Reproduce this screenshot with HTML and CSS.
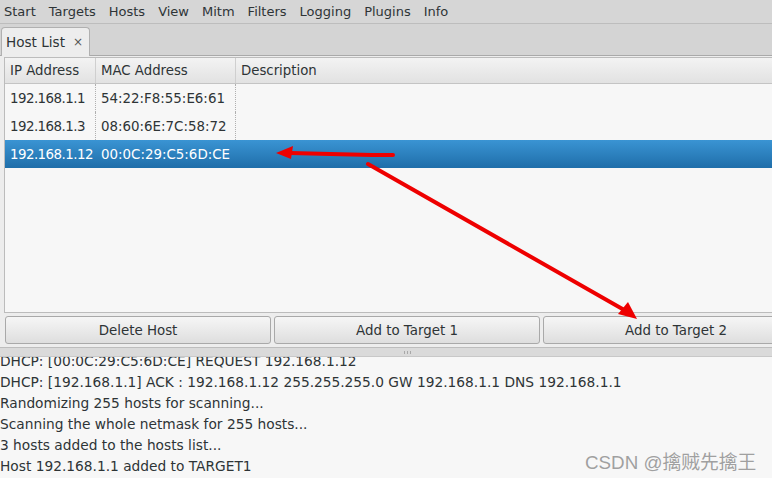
FILE: index.html
```html
<!DOCTYPE html>
<html>
<head>
<meta charset="utf-8">
<link rel="stylesheet" href="styles.css">
</head>
<body>
<div class="app">
  <div class="menubar">
    <span class="menu">Start</span>
    <span class="menu">Targets</span>
    <span class="menu">Hosts</span>
    <span class="menu">View</span>
    <span class="menu">Mitm</span>
    <span class="menu">Filters</span>
    <span class="menu">Logging</span>
    <span class="menu">Plugins</span>
    <span class="menu">Info</span>
  </div>
  <div class="tabbar">
    <div class="tab"><span class="tab-label">Host List</span><span class="tab-close">×</span></div>
  </div>
  <div class="page">
    <div class="tree">
      <div class="thead">
        <div class="col c1">IP Address</div>
        <div class="col c2">MAC Address</div>
        <div class="col c3">Description</div>
      </div>
      <div class="row">
        <div class="cell c1 ip">192.168.1.1</div>
        <div class="cell c2">54:22:F8:55:E6:61</div>
        <div class="cell c3"></div>
      </div>
      <div class="row">
        <div class="cell c1 ip">192.168.1.3</div>
        <div class="cell c2">08:60:6E:7C:58:72</div>
        <div class="cell c3"></div>
      </div>
      <div class="row selected">
        <div class="cell c1 ip">192.168.1.12</div>
        <div class="cell c2">00:0C:29:C5:6D:CE</div>
        <div class="cell c3"></div>
      </div>
    </div>
    <div class="buttons">
      <div class="btn">Delete Host</div>
      <div class="btn">Add to Target 1</div>
      <div class="btn">Add to Target 2</div>
    </div>
  </div>
  <div class="pane-sep"><span class="grip"></span></div>
  <div class="log">
    <div class="log-inner">
      <div class="line">DHCP: [00:0C:29:C5:6D:CE] REQUEST 192.168.1.12</div>
      <div class="line">DHCP: [192.168.1.1] ACK : 192.168.1.12 255.255.255.0 GW 192.168.1.1 DNS 192.168.1.1</div>
      <div class="line">Randomizing 255 hosts for scanning...</div>
      <div class="line">Scanning the whole netmask for 255 hosts...</div>
      <div class="line">3 hosts added to the hosts list...</div>
      <div class="line">Host 192.168.1.1 added to TARGET1</div>
    </div>
  </div>
  <div class="watermark">CSDN @擒贼先擒王</div>
  <svg class="arrows" width="772" height="478" viewBox="0 0 772 478">
    <path d="M393 155 L372 155 L330 154 L290 153" stroke="#ee0000" stroke-width="4" fill="none" stroke-linecap="round"/>
    <polygon points="276,153 293,146 291,159" fill="#ee0000"/>
    <path d="M368 164 L626 311" stroke="#ee0000" stroke-width="4" fill="none" stroke-linecap="round"/>
    <polygon points="637,319 618,314 628,302" fill="#ee0000"/>
  </svg>
</div>
</body>
</html>
```
FILE: styles.css
```css
html, body {
  margin: 0;
  padding: 0;
}
body {
  width: 772px;
  height: 478px;
  overflow: hidden;
  background: #f7f7f7;
  font-family: "DejaVu Sans", sans-serif;
  font-size: 13.4px;
  color: #2e3436;
}
.app {
  position: relative;
  width: 772px;
  height: 478px;
  overflow: hidden;
  display: flex;
  flex-direction: column;
}
.menubar {
  height: 24px;
  flex: none;
  display: flex;
  align-items: center;
  background: #d6d6d6;
  border-bottom: 1px solid #bdbdbd;
  box-sizing: border-box;
  padding-left: 4px;
  gap: 13px;
  font-size: 13px;
}
.menu {
  line-height: 22px;
}
.tabbar {
  height: 32px;
  flex: none;
  box-sizing: border-box;
  background: #d4d4d4;
  border-bottom: 1px solid #a9a9a9;
  display: flex;
  align-items: flex-end;
  padding-left: 1px;
}
.tab {
  height: 29px;
  width: 89px;
  box-sizing: border-box;
  border: 1px solid #b0b0b0;
  border-bottom: none;
  border-radius: 4px 4px 0 0;
  background: #ededed;
  margin-bottom: -1px;
  display: flex;
  align-items: center;
  padding-left: 4px;
  font-size: 13.6px;
}
.tab-close {
  margin-left: 8px;
  font-size: 12px;
  color: #555;
}
.page {
  flex: none;
  height: 291px;
  background: #ededed;
  padding: 1px 0 0 4px;
  box-sizing: border-box;
}
.tree {
  height: 256px;
  box-sizing: border-box;
  border: 1px solid #bcbcbc;
  border-right: none;
  background: #f7f7f7;
}
.thead {
  height: 26px;
  display: flex;
  background: linear-gradient(#f3f3f3, #e2e2e2);
  border-bottom: 1px solid #c4c4c4;
  box-sizing: border-box;
  font-size: 13.3px;
}
.col {
  display: flex;
  align-items: center;
  padding-left: 5px;
  box-sizing: border-box;
  border-right: 1px solid #cfcfcf;
}
.col.c3 { border-right: none; }
.c1 { width: 91px; flex: none; }
.c2 { width: 140px; flex: none; }
.c3 { flex: 1; }
.row {
  height: 28px;
  display: flex;
}
.cell {
  display: flex;
  align-items: center;
  padding-left: 5px;
  box-sizing: border-box;
  border-right: 1px dotted #b0b0b0;
  white-space: nowrap;
}
.cell.ip { letter-spacing: -0.55px; }
.cell.c3 { border-right: none; }
.row.selected {
  background: linear-gradient(#3a94d3, #1f6ea9);
  color: #ffffff;
}
.row.selected .cell { border-right-color: transparent; }
.buttons {
  display: grid;
  grid-template-columns: 266px 266px 266px;
  gap: 3px;
  padding: 3px 0 0 1px;
}
.btn {
  height: 28px;
  box-sizing: border-box;
  border: 1px solid #a9a9a9;
  border-radius: 3px;
  background: linear-gradient(#f6f6f6, #dedede);
  display: flex;
  align-items: center;
  justify-content: center;
  font-size: 13.4px;
}
.pane-sep {
  flex: none;
  height: 10px;
  box-sizing: border-box;
  background: #dadada;
  border-top: 1px solid #bdbdbd;
  border-bottom: 1px solid #c8c8c8;
  position: relative;
}
.grip {
  position: absolute;
  left: 404px;
  top: 3px;
  width: 9px;
  height: 3px;
  background: repeating-linear-gradient(90deg, #a8a8a8 0 1px, transparent 1px 3px);
}
.log {
  flex: 1;
  overflow: hidden;
  background: #f7f7f7;
}
.log-inner {
  margin-top: -6px;
  font-size: 13.75px;
}
.line {
  height: 21px;
  line-height: 21px;
  white-space: nowrap;
}
.watermark {
  position: absolute;
  left: 585px;
  top: 447px;
  font-family: "Liberation Sans", "Noto Sans CJK SC", sans-serif;
  font-size: 18.8px;
  color: #a0a0a0;
  text-shadow: 0 0 1px #fff;
  white-space: nowrap;
}
.arrows {
  position: absolute;
  left: 0;
  top: 0;
  pointer-events: none;
}
```
